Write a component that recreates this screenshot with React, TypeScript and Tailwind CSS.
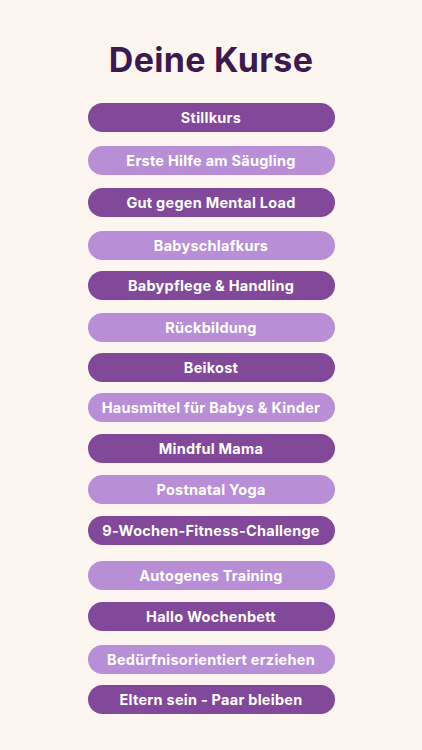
const courses = [
  { title: 'Stillkurs', dark: true, gap: 'mt-0' },
  { title: 'Erste Hilfe am Säugling', dark: false, gap: 'mt-[14px]' },
  { title: 'Gut gegen Mental Load', dark: true, gap: 'mt-[13px]' },
  { title: 'Babyschlafkurs', dark: false, gap: 'mt-[14px]' },
  { title: 'Babypflege & Handling', dark: true, gap: 'mt-[11px]' },
  { title: 'Rückbildung', dark: false, gap: 'mt-[13px]' },
  { title: 'Beikost', dark: true, gap: 'mt-[11px]' },
  { title: 'Hausmittel für Babys & Kinder', dark: false, gap: 'mt-[11px]' },
  { title: 'Mindful Mama', dark: true, gap: 'mt-[12px]' },
  { title: 'Postnatal Yoga', dark: false, gap: 'mt-[12px]' },
  { title: '9-Wochen-Fitness-Challenge', dark: true, gap: 'mt-[12px]' },
  { title: 'Autogenes Training', dark: false, gap: 'mt-[16px]' },
  { title: 'Hallo Wochenbett', dark: true, gap: 'mt-[12px]' },
  { title: 'Bedürfnisorientiert erziehen', dark: false, gap: 'mt-[14px]' },
  { title: 'Eltern sein - Paar bleiben', dark: true, gap: 'mt-[11px]' },
]

export default function App() {
  return (
    <div
      className="flex h-[750px] w-[422px] flex-col items-center overflow-hidden bg-[#fdf5ef] pt-[38px]"
      style={{ fontFamily: 'Inter, "Noto Sans", sans-serif' }}
    >
      <h1 className="text-[34px] font-bold leading-[43px] tracking-[0.3px] text-[#3b1a4c]">Deine Kurse</h1>

      <div className="mt-[22px] flex w-[247px] flex-col">
        {courses.map((course) => (
          <button
            key={course.title}
            type="button"
            className={`${course.gap} flex h-[29px] w-full items-center justify-center rounded-full text-[14.5px] font-bold tracking-[0.25px] text-white ${
              course.dark ? 'bg-[#82489a]' : 'bg-[#b88fd6]'
            }`}
          >
            {course.title}
          </button>
        ))}
      </div>
    </div>
  )
}
